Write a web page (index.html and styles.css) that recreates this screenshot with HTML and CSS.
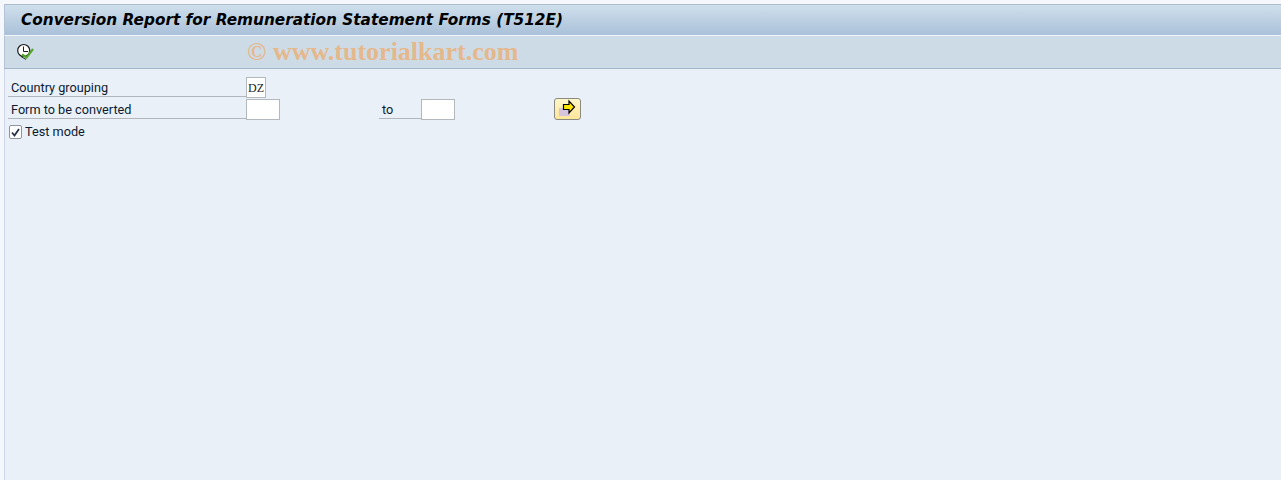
FILE: index.html
```html
<!DOCTYPE html>
<html lang="en">
<head>
<meta charset="utf-8">
<title>Conversion Report for Remuneration Statement Forms (T512E)</title>
<link rel="stylesheet" href="styles.css">
</head>
<body>
<div class="window">
  <header class="titlebar"><h1>Conversion Report for Remuneration Statement Forms (T512E)</h1></header>
  <div class="toolbar">
    <button class="tool" type="button" aria-label="Execute in background">
      <svg width="18" height="18" viewBox="0 0 18 18">
        <circle cx="7.700" cy="7.500" r="6" fill="#fff" stroke="#1c1c1c" stroke-width="1.200"/>
        <path d="M7.500 3.500V8.500H12" fill="none" stroke="#1c1c1c" stroke-width="1"/>
        <path d="M5 13.500l5 3" fill="none" stroke="#20301a" stroke-width="1"/>
        <path d="M6 11.500l4.500 3L17 6" fill="none" stroke="#54a52c" stroke-width="2.200"/>
      </svg>
    </button>
    <span class="watermark">© www.tutorialkart.com</span>
  </div>
  <main class="form">
    <div class="row">
      <label class="label">Country grouping</label>
      <span class="field short">DZ</span>
    </div>
    <div class="row">
      <label class="label">Form to be converted</label>
      <span class="field wide"></span>
      <label class="label to">to</label>
      <span class="field wide"></span>
      <button class="more" type="button" aria-label="Multiple selection">
        <svg width="25" height="20" viewBox="0 0 25 20">
          <rect x="4" y="9" width="11" height="8" fill="#d6c4de"/>
          <path d="M8.500 5.500H14V2l5.500 6L14 14v-3.500H8.500z" fill="#ffe600" stroke="#000" stroke-width="1.200"/>
        </svg>
      </button>
    </div>
    <div class="row check-row">
      <span class="checkbox">
        <svg width="9" height="9" viewBox="0 0 9 9"><path d="M1 4.500l2.500 3L8 1" fill="none" stroke="#26324a" stroke-width="1.800"/></svg>
      </span>
      <label class="check-label">Test mode</label>
    </div>
  </main>
</div>
</body>
</html>
```
FILE: styles.css
```css
html, body { margin: 0; height: 100%; }
body {
  background: #f4f7fb;
  overflow: hidden;
  font-family: "Roboto", "Noto Sans", sans-serif;
  font-size: 12.7px;
  color: #0c1a30;
}
.window {
  box-sizing: border-box;
  height: 480px;
  margin-left: 4px;
  padding-top: 4px;
  display: flex;
  flex-direction: column;
}
.titlebar {
  box-sizing: border-box;
  height: 32px;
  border-top: 1px solid #aebccd;
  border-left: 1px solid #b4c3d6;
  border-bottom: 1px solid #eef4fa;
  background: linear-gradient(#cfdfec, #aac1d9);
  padding-left: 16px;
  display: flex;
  align-items: center;
}
.titlebar h1 {
  margin: 0;
  font: italic bold 15.3px "DejaVu Sans", sans-serif;
  color: #000;
}
.toolbar {
  position: relative;
  box-sizing: border-box;
  height: 33px;
  background: #cddbe7;
  border-left: 1px solid #b4c3d6;
  border-bottom: 1px solid #a5b6c8;
  padding-left: 11px;
  display: flex;
  align-items: center;
}
.tool {
  border: 0;
  padding: 0;
  background: none;
  width: 18px;
  height: 18px;
}
.watermark {
  position: absolute;
  left: 242px;
  top: 1px;
  font: bold 26px "Liberation Serif", serif;
  color: #e5b88c;
}
.form {
  flex: 1;
  background: #e9f0f7;
  border-left: 1px solid #cfd6ea;
  padding: 8px 0 0 3px;
}
.row {
  display: flex;
  height: 22px;
}
.label {
  box-sizing: border-box;
  width: 238px;
  height: 20px;
  padding-left: 3px;
  line-height: 21px;
  border-bottom: 1px solid #b0b6bc;
  white-space: nowrap;
}
.to {
  width: 42px;
  margin-left: 99px;
}
.field {
  box-sizing: border-box;
  height: 21px;
  background: #fff;
  border: 1px solid #b3b8bd;
  font: 12px/21px "Liberation Serif", serif;
  color: #222;
  text-align: center;
}
.short { width: 20px; }
.wide { width: 34px; }
.more {
  box-sizing: border-box;
  width: 27px;
  height: 22px;
  margin: -1px 0 0 99px;
  padding: 0;
  border: 1px solid #8a8a80;
  border-radius: 3px;
  background: linear-gradient(#fff6c8, #ffe69a);
  display: flex;
  align-items: center;
}
.check-row { align-items: center; padding-left: 1px; gap: 3px; }
.checkbox {
  box-sizing: border-box;
  width: 13px;
  height: 14px;
  background: #fff;
  border: 1px solid #8d949c;
  border-radius: 2px;
  display: flex;
  align-items: center;
  justify-content: center;
}
.check-label { line-height: 20px; }
```
